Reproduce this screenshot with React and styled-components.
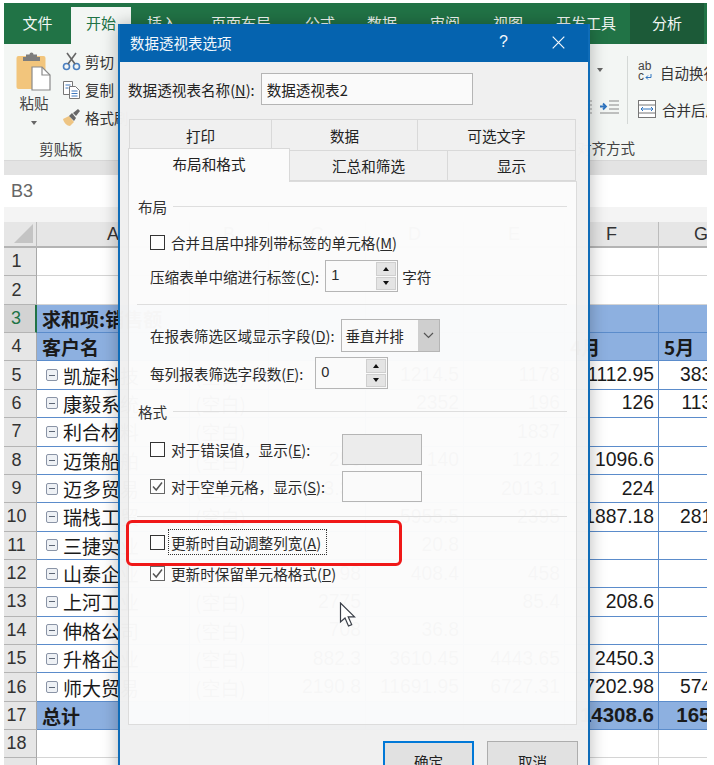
import React from 'react'
import styled, { createGlobalStyle } from 'styled-components'

const CJK = '"Noto Sans CJK SC", "Liberation Sans", sans-serif'
const LATIN = '"Liberation Sans", "Noto Sans CJK SC", sans-serif'

const Global = createGlobalStyle`
  html, body { margin: 0; padding: 0; background: #fff; overflow: hidden; }
  * { box-sizing: border-box; }
`

const Page = styled.div`
  position: relative;
  width: 714px;
  height: 765px;
  overflow: hidden;
  padding: 3px 7px 0 4px;
  font-family: ${CJK};
  color: #222;
`

const Excel = styled.div`
  width: 703px;
  overflow: hidden;
`

/* ribbon */
const TabBar = styled.div`
  display: flex;
  height: 41px;
  background: #217346;
`

const RibbonTab = styled.div`
  width: ${p => p.$w}px;
  margin-top: ${p => (p.$active ? 4 : 0)}px;
  display: flex;
  align-items: center;
  justify-content: center;
  padding-bottom: ${p => (p.$active ? 7 : 3)}px;
  font-size: 15px;
  color: ${p => (p.$active ? '#217346' : '#f2f7f4')};
  background: ${p => (p.$active ? '#f3f6f4' : p.$dark ? '#1c5a38' : 'transparent')};
  margin-left: ${p => p.$gap || 0}px;
`

const Ribbon = styled.div`
  height: 116px;
  background: #f3f6f4;
  display: flex;
  justify-content: space-between;
`

const ClipGroup = styled.div`
  width: 114px;
  display: flex;
  flex-direction: column;
  align-items: center;
  padding-top: 7px;
`

const ClipBody = styled.div`
  display: flex;
  width: 100%;
  height: 88px;
  padding-left: 12px;
`

const Paste = styled.div`
  width: 36px;
  display: flex;
  flex-direction: column;
  align-items: center;
  font-size: 14.5px;
  line-height: 18px;
  color: #333;
`

const Caret = styled.div`
  width: 0;
  height: 0;
  margin: ${p => p.$margin || '9px 0 0'};
  border-left: 3.5px solid transparent;
  border-right: 3.5px solid transparent;
  border-top: 4px solid #666;
`

const ClipList = styled.div`
  margin-left: 10px;
  display: flex;
  flex-direction: column;
  gap: 7px;
`

const ClipItem = styled.div`
  display: flex;
  align-items: center;
  gap: 4px;
  height: 21px;
  font-size: 14.5px;
  color: #333;
  white-space: nowrap;
`

const GroupName = styled.div`
  font-size: 14.5px;
  line-height: 18px;
  margin-top: ${p => p.$top || 0}px;
  color: #444;
`

const AlignGroup = styled.div`
  width: 130px;
  display: flex;
  flex-direction: column;
  overflow: hidden;
`

const AlignBody = styled.div`
  display: flex;
  height: 85px;
  padding: 12px 0 0 11px;
`

const AlignTools = styled.div`
  width: 40px;
  flex: none;
  display: flex;
  flex-direction: column;
  align-items: flex-end;
  gap: 27px;
  padding: 12px 8px 0 0;
  border-right: 1px solid #d4d8d6;
  height: 68px;
`

const WrapList = styled.div`
  display: flex;
  flex-direction: column;
  gap: 15px;
  padding: 5px 0 0 10px;
`

const WrapItem = styled.div`
  display: flex;
  align-items: center;
  gap: ${p => p.$gap}px;
  height: 22px;
  font-size: 14.5px;
  color: #333;
  white-space: nowrap;
`

const GrayBand = styled.div`
  height: 15px;
  background: #e3e3e3;
  border-top: 1px solid #d8d8d8;
`

const FormulaBar = styled.div`
  height: 32px;
  padding-left: 7px;
  display: flex;
  align-items: center;
  font-family: ${LATIN};
  font-size: 18px;
  color: #666;
  background: #fff;
`

const Spacer = styled.div`
  height: 15px;
  background: #f4f4f4;
`

/* sheet */
const Grid = styled.div`
  display: grid;
  grid-template-columns: 33px 153px 79px 97px 98px 101px 94px 85px;
  height: ${p => p.$h}px;
  width: 740px;
`

const ColHead = styled.div`
  display: flex;
  align-items: center;
  justify-content: center;
  background: #e6e6e6;
  border-right: 1px solid #bcbcbc;
  border-bottom: 2px solid #b4b4b4;
  font-family: ${LATIN};
  font-size: 18px;
  color: #333;
`

const Corner = styled.div`
  background: #e6e6e6;
  border-right: 1px solid #bcbcbc;
  border-bottom: 2px solid #b4b4b4;
  display: flex;
  align-items: flex-end;
  justify-content: flex-end;
  padding: 0 3px 3px 0;
`

const RowHead = styled.div`
  display: flex;
  align-items: center;
  justify-content: center;
  padding-right: 7px;
  background: ${p => (p.$active ? '#d3d3d3' : '#e6e6e6')};
  color: ${p => (p.$active ? '#217346' : '#333')};
  border-bottom: 1px solid #b4b4b4;
  border-right: ${p => (p.$active ? '2px solid #217346' : '1px solid #a8a8a8')};
  font-family: ${LATIN};
  font-size: 18px;
`

const cellBack = { head: '#8db0e0', total: '#8db0e0', body: '#fff', blank: '#fff' }

const Cell = styled.div`
  display: flex;
  align-items: center;
  justify-content: ${p => (p.$num ? 'flex-end' : 'flex-start')};
  padding: ${p => (p.$num ? '0 4px 0 0' : '0 0 0 5px')};
  white-space: nowrap;
  overflow: ${p => (p.$clip ? 'hidden' : 'visible')};
  background: ${p => cellBack[p.$kind]};
  border-right: 1px solid ${p => (p.$kind === 'blank' ? '#d4d4d4' : '#5b8ccb')};
  border-bottom: 1px solid ${p => (p.$kind === 'blank' ? '#d4d4d4' : '#5b8ccb')};
  font-family: ${p => (p.$num ? LATIN : CJK)};
  font-size: ${p => (p.$num ? (p.$kind === 'total' ? 20.5 : 19.3) : 19)}px;
  font-weight: ${p => (p.$kind === 'head' || p.$kind === 'total' ? 700 : 400)};
  color: #1a1a1a;
`

const NameCell = styled(Cell)`
  padding-left: 9px;
`

const Minus = styled.span`
  width: 12px;
  height: 12px;
  margin-right: 5px;
  flex: none;
  border: 1px solid #8a94a6;
  border-radius: 2px;
  background: #eef1f5;
  display: flex;
  align-items: center;
  justify-content: center;
  &::after {
    content: '';
    width: 6px;
    height: 1px;
    background: #5d6675;
  }
`

/* dialog */
const Dialog = styled.div`
  position: absolute;
  left: 118px;
  top: 24px;
  width: 472px;
  height: 790px;
  border: 2px solid #0f6cb8;
  border-top: 0;
  box-shadow: 0 0 16px rgba(0, 0, 0, 0.28);
  display: flex;
  flex-direction: column;
`

const TitleBar = styled.div`
  height: 38px;
  flex: none;
  background: #0563af;
  color: #f3f8fc;
  display: flex;
  align-items: center;
  padding: 0 23px 2px 10px;
  font-size: 14.5px;
`

const Title = styled.div`
  flex: 1;
`

const Help = styled.div`
  font-family: ${LATIN};
  font-size: 16px;
  margin-right: 44px;
`

const glass = 'rgba(240, 240, 240, 0.985)'

const Head = styled.div`
  background: ${glass};
  padding: 11px 11px 0 8px;
  flex: none;
`

const NameRow = styled.div`
  display: flex;
  align-items: center;
  height: 32px;
  margin-bottom: 14px;
  font-size: 14.6px;
  color: #222;
`

const NameInput = styled.div`
  width: 212px;
  height: 32px;
  margin-left: 6px;
  padding-left: 5px;
  border: 1px solid #b5b5b5;
  background: #fafafa;
  display: flex;
  align-items: center;
  font-size: 14.6px;
`

const TabRow = styled.div`
  display: flex;
  height: ${p => p.$h}px;
  padding-left: ${p => p.$pad || 0}px;
  position: relative;
`

const Tab = styled.div`
  width: ${p => p.$w}px;
  flex: none;
  display: flex;
  align-items: center;
  justify-content: center;
  font-size: 14.6px;
  color: #222;
  background: #f0f0f0;
  border: 1px solid #d9d9d9;
  border-left-width: ${p => (p.$first ? 1 : 0)}px;
  border-bottom-width: ${p => (p.$low ? 1 : 0)}px;
`

const ActiveTab = styled(Tab)`
  background: #fbfbfb;
  height: 34px;
  margin-top: -2px;
  border-bottom: 0;
  padding-bottom: 4px;
  position: relative;
  z-index: 1;
`

const PanelFrame = styled.div`
  flex: none;
  border-style: solid;
  border-color: ${glass};
  border-width: 0 11px 0 8px;
  background-clip: padding-box;
`

const Panel = styled.div`
  height: 544px;
  padding: 14px 9px 0 8px;
  background: rgba(251, 251, 251, 0.982);
  border: 1px solid #dcdcdc;
  display: flex;
  flex-direction: column;
`

const Section = styled.div`
  display: flex;
  align-items: center;
  gap: 6px;
  height: 20px;
  margin-top: ${p => p.$top || 0}px;
  padding-left: 1px;
  font-size: 14.6px;
  color: #333;
  &::after {
    content: '';
    flex: 1;
    height: 1px;
    background: #dedede;
  }
`

const Rule = styled.div`
  height: 1px;
  flex: none;
  margin-top: ${p => p.$top}px;
  background: #dedede;
`

const Row = styled.div`
  display: flex;
  align-items: center;
  height: ${p => p.$h}px;
  flex: none;
  margin-top: ${p => p.$top}px;
  padding-left: 13px;
  font-size: 14.6px;
  color: #2a2a2a;
  white-space: nowrap;
`

const Box = styled.span`
  width: 15px;
  height: 15px;
  flex: none;
  margin-right: 6px;
  border: 1px solid ${p => (p.$on ? '#666' : '#333')};
  background: #fdfdfd;
  display: flex;
  align-items: center;
  justify-content: center;
`

const Focus = styled.span`
  display: flex;
  align-items: center;
  height: 24px;
  margin-left: -2px;
  padding: 0 5px 0 2px;
  outline: 1px dotted #333;
`

const Spin = styled.div`
  width: 73px;
  height: 32px;
  margin-left: ${p => p.$left}px;
  border: 1px solid #b5b5b5;
  background: #fafafa;
  display: flex;
  justify-content: space-between;
  padding: 1px 1px 1px 5px;
  font-family: ${LATIN};
  font-size: 14.6px;
  line-height: 26px;
`

const SpinButtons = styled.div`
  width: 20px;
  display: flex;
  flex-direction: column;
  gap: 1px;
`

const SpinButton = styled.div`
  flex: 1;
  background: #e4e4e4;
  border: 1px solid #cfcfcf;
  display: flex;
  align-items: center;
  justify-content: center;
  &::after {
    content: '';
    border-left: 3.5px solid transparent;
    border-right: 3.5px solid transparent;
    ${p => (p.$up ? 'border-bottom: 4px solid #111;' : 'border-top: 4px solid #111;')}
  }
`

const Unit = styled.span`
  margin-left: 4px;
`

const Select = styled.div`
  width: 99px;
  height: 33px;
  margin-left: 6px;
  border: 1px solid #b5b5b5;
  background: #fafafa;
  display: flex;
  align-items: stretch;
`

const SelectText = styled.div`
  flex: 1;
  padding-left: 4px;
  display: flex;
  align-items: center;
`

const SelectArrow = styled.div`
  width: 21px;
  background: #cfcfcf;
  display: flex;
  align-items: center;
  justify-content: center;
`

const FieldRow = styled(Row)`
  justify-content: space-between;
  padding-right: 145px;
`

const FieldLabel = styled.span`
  display: flex;
  align-items: center;
`

const FieldBox = styled.div`
  width: 80px;
  height: 31px;
  border: 1px solid #b5b5b5;
  background: ${p => (p.$off ? '#ececec' : '#fafafa')};
`

const Footer = styled.div`
  flex: 1;
  background: ${glass};
  display: flex;
  justify-content: flex-end;
  gap: 13px;
  padding: 16px 10px 0 0;
`

const Button = styled.div`
  width: 91px;
  height: 40px;
  background: #e1e1e1;
  border: ${p => (p.$primary ? '2px solid #0078d7' : '1px solid #adadad')};
  display: flex;
  align-items: center;
  justify-content: center;
  font-size: 14.6px;
  color: #222;
`

/* things lying over the dialog */
const Highlight = styled.div`
  position: absolute;
  left: 126px;
  top: 520px;
  width: 276px;
  height: 46px;
  border: 3px solid #f01818;
  border-radius: 6px;
`

const Pointer = styled.svg`
  position: absolute;
  left: 339px;
  top: 602px;
`

const Mark = styled.svg`
  display: block;
  flex: none;
`

const ClipboardIcon = () => (
  <Mark width="36" height="40" viewBox="0 0 36 40">
    <rect x="0.5" y="5" width="29" height="33" rx="2" fill="#f2c57c" />
    <path d="M10 6V3.5h3.5a2 2 0 0 1 4 0H21V6h3v4H7V6z" fill="#7d7d7d" />
    <path d="M16 16h10l8 8v15H16z" fill="#fff" stroke="#8a8a8a" strokeWidth="1.2" />
    <path d="M26 16v8h8" fill="none" stroke="#8a8a8a" strokeWidth="1.2" />
  </Mark>
)

const ScissorsIcon = () => (
  <Mark width="19" height="19" viewBox="0 0 19 19">
    <circle cx="4.5" cy="14.5" r="3" fill="none" stroke="#4a7fc0" strokeWidth="1.6" />
    <circle cx="14.5" cy="14.5" r="3" fill="none" stroke="#4a7fc0" strokeWidth="1.6" />
    <path d="M6 12L14 1M13 12L5 1" stroke="#666" strokeWidth="1.6" fill="none" />
  </Mark>
)

const CopyIcon = () => (
  <Mark width="19" height="19" viewBox="0 0 19 19">
    <path d="M1.5 1.5h9v13h-9z" fill="#fff" stroke="#777" />
    <path d="M7.5 6.5h6l4 4v8h-10z" fill="#fff" stroke="#777" />
    <path d="M3.5 5h5M3.5 8h3M9.5 11h6M9.5 13.5h6M9.5 16h6" stroke="#3f78bd" />
  </Mark>
)

const BrushIcon = () => (
  <Mark width="19" height="19" viewBox="0 0 19 19">
    <path d="M1 11l6-3 5 6-4 4c-3 0-6-3-7-7z" fill="#eec583" />
    <path d="M7 8l3-3 4 5-2 3z" fill="#666" />
    <path d="M11 5l5-4 2 2-4 5z" fill="#666" />
  </Mark>
)

const IndentIcon = () => (
  <Mark width="32" height="15" viewBox="0 0 32 15">
    <path d="M0 2h5M0 6h5M0 10h5M0 14h5" stroke="#999" />
    <path d="M13 7.5h5M16 4.5l3 3-3 3" stroke="#2f74c0" strokeWidth="1.8" fill="none" />
    <path d="M22 2h10M22 6h10M22 10h10M13 14h19" stroke="#888" />
  </Mark>
)

const WrapIcon = () => (
  <Mark width="15" height="22" viewBox="0 0 15 22">
    <text x="0" y="9" fontFamily={LATIN} fontSize="12" fill="#444">ab</text>
    <text x="0" y="19" fontFamily={LATIN} fontSize="12" fill="#444">c</text>
    <path d="M13 13v3.5H8M10 14.5l-2 2 2 2" stroke="#2f74c0" fill="none" />
  </Mark>
)

const MergeIcon = () => (
  <Mark width="18" height="18" viewBox="0 0 18 18">
    <rect x="0.5" y="0.5" width="17" height="17" fill="#fff" stroke="#777" />
    <path d="M1 5h16M1 13h16" stroke="#777" />
    <path d="M3 9h12M5 7l-2 2 2 2M13 7l2 2-2 2" stroke="#2f74c0" fill="none" />
  </Mark>
)

const Check = () => (
  <Mark width="13" height="13" viewBox="0 0 13 13">
    <path d="M2 6.5l3.2 3.5L11 2.5" stroke="#555" strokeWidth="1.5" fill="none" />
  </Mark>
)

const Chevron = () => (
  <Mark width="11" height="7" viewBox="0 0 11 7">
    <path d="M1 1l4.5 4.5L10 1" stroke="#555" strokeWidth="1.2" fill="none" />
  </Mark>
)

const CloseIcon = () => (
  <Mark width="13" height="13" viewBox="0 0 13 13">
    <path d="M.7.7l11.6 11.6M12.3.7L.7 12.3" stroke="#f3f8fc" strokeWidth="1.2" />
  </Mark>
)

const body = (name, ...cells) => ({ kind: 'body', name, cells })
const empty = { kind: 'blank', cells: ['', '', '', '', '', '', ''] }

const sheet = [
  empty,
  empty,
  { kind: 'head', cells: ['求和项:销售额', '', '', '', '', '', ''] },
  { kind: 'head', cells: ['客户名', '', '', '', '', '4月', '5月'] },
  body('凯旋科技', '(空白)', '', '1214.5', '1178', '1112.95', '3830.5'),
  body('康毅系统', '(空白)', '', '2352', '196', '126', '1130.5'),
  body('利合材料', '(空白)', '', '', '1837', '', ''),
  body('迈策船舶', '(空白)', '256', '140', '121.2', '1096.6', ''),
  body('迈多贸易', '(空白)', '13.35', '', '2013.1', '224', ''),
  body('瑞栈工贸', '(空白)', '', '5955.5', '2395', '1887.18', '2810.5'),
  body('三捷实业', '(空白)', '', '20.8', '', '', ''),
  body('山泰企业', '(空白)', '98', '408.4', '458', '', ''),
  body('上河工业', '(空白)', '2775', '', '85.4', '208.6', ''),
  body('伸格公司', '(空白)', '708', '36.8', '', '', ''),
  body('升格企业', '(空白)', '882.3', '3610.45', '4443.65', '2450.3', ''),
  body('师大贸易', '(空白)', '2190.8', '11691.95', '6727.31', '7202.98', '5740.5'),
  { kind: 'total', cells: ['总计', '', '', '', '', '14308.6', '1650.5'] },
  empty,
  empty,
]

const SheetRow = ({ index, row }) => {
  const { kind, name, cells } = row
  return (
    <Grid $h={28.36}>
      <RowHead $active={index === 3}>{index}</RowHead>
      {name && (
        <NameCell $kind={kind} $clip>
          <Minus />
          {name}
        </NameCell>
      )}
      {cells.map((value, i) => (
        <Cell key={i} $kind={kind} $num={/^[\d.]+$/.test(value)} $clip={i === 0 && !name}>
          {value}
        </Cell>
      ))}
    </Grid>
  )
}

const App = () => {
  return (
    <Page>
      <Global />
      <Excel>
        <TabBar>
          <RibbonTab $w={67}>文件</RibbonTab>
          <RibbonTab $w={60} $active>开始</RibbonTab>
          <RibbonTab $w={62}>插入</RibbonTab>
          <RibbonTab $w={96}>页面布局</RibbonTab>
          <RibbonTab $w={62}>公式</RibbonTab>
          <RibbonTab $w={62}>数据</RibbonTab>
          <RibbonTab $w={64}>审阅</RibbonTab>
          <RibbonTab $w={62}>视图</RibbonTab>
          <RibbonTab $w={94}>开发工具</RibbonTab>
          <RibbonTab $w={74} $gap={-3} $dark>分析</RibbonTab>
        </TabBar>
        <Ribbon>
          <ClipGroup>
            <ClipBody>
              <Paste>
                <ClipboardIcon />
                <GroupName $top={3}>粘贴</GroupName>
                <Caret />
              </Paste>
              <ClipList>
                <ClipItem><ScissorsIcon />剪切</ClipItem>
                <ClipItem><CopyIcon />复制</ClipItem>
                <ClipItem><BrushIcon />格式刷</ClipItem>
              </ClipList>
            </ClipBody>
            <GroupName $top={1}>剪贴板</GroupName>
          </ClipGroup>
          <AlignGroup>
            <AlignBody>
              <AlignTools>
                <Caret $margin="0 16px 0 0" />
                <IndentIcon />
              </AlignTools>
              <WrapList>
                <WrapItem $gap={7}><WrapIcon />自动换行</WrapItem>
                <WrapItem $gap={6}><MergeIcon />合并后居中</WrapItem>
              </WrapList>
            </AlignBody>
            <GroupName $top={10}>对齐方式</GroupName>
          </AlignGroup>
        </Ribbon>
        <GrayBand />
        <FormulaBar>B3</FormulaBar>
        <Spacer />
        <Grid $h={26}>
          <Corner>
            <Mark width="19" height="19" viewBox="0 0 19 19">
              <path d="M19 0v19H0z" fill="#c4c4c4" />
            </Mark>
          </Corner>
          {['A', 'B', 'C', 'D', 'E', 'F', 'G'].map(col => (
            <ColHead key={col}>{col}</ColHead>
          ))}
        </Grid>
        {sheet.map((row, i) => (
          <SheetRow key={i} index={i + 1} row={row} />
        ))}
      </Excel>

      <Dialog>
        <TitleBar>
          <Title>数据透视表选项</Title>
          <Help>?</Help>
          <CloseIcon />
        </TitleBar>
        <Head>
          <NameRow>
            数据透视表名称(<u>N</u>):
            <NameInput>数据透视表2</NameInput>
          </NameRow>
          <TabRow $h={31} $pad={1}>
            <Tab $w={143} $first>打印</Tab>
            <Tab $w={146}>数据</Tab>
            <Tab $w={158}>可选文字</Tab>
          </TabRow>
          <TabRow $h={31}>
            <ActiveTab $w={162} $first>布局和格式</ActiveTab>
            <Tab $w={158} $low>汇总和筛选</Tab>
            <Tab $w={128} $low>显示</Tab>
          </TabRow>
        </Head>
        <PanelFrame>
          <Panel>
            <Section>布局</Section>
            <Row $h={22} $top={15}><Box />合并且居中排列带标签的单元格(<u>M</u>)</Row>
            <Row $h={32} $top={7}>
              压缩表单中缩进行标签(<u>C</u>):
              <Spin $left={6}>
                1
                <SpinButtons><SpinButton $up /><SpinButton /></SpinButtons>
              </Spin>
              <Unit>字符</Unit>
            </Row>
            <Rule $top={12} />
            <Row $h={33} $top={14}>
              在报表筛选区域显示字段(<u>D</u>):
              <Select>
                <SelectText>垂直并排</SelectText>
                <SelectArrow><Chevron /></SelectArrow>
              </Select>
            </Row>
            <Row $h={32} $top={5}>
              每列报表筛选字段数(<u>F</u>):
              <Spin $left={12}>
                0
                <SpinButtons><SpinButton $up /><SpinButton /></SpinButtons>
              </Spin>
            </Row>
            <Section $top={12}>格式</Section>
            <FieldRow $h={31} $top={13}>
              <FieldLabel><Box />对于错误值{'\uFF0C'}显示(<u>E</u>):</FieldLabel>
              <FieldBox $off />
            </FieldRow>
            <FieldRow $h={31} $top={6}>
              <FieldLabel><Box $on><Check /></Box>对于空单元格{'\uFF0C'}显示(<u>S</u>):</FieldLabel>
              <FieldBox />
            </FieldRow>
            <Rule $top={14} />
            <Row $h={24} $top={13}>
              <Box />
              <Focus>更新时自动调整列宽(<u>A</u>)</Focus>
            </Row>
            <Row $h={22} $top={8}><Box $on><Check /></Box>更新时保留单元格格式(<u>P</u>)</Row>
          </Panel>
        </PanelFrame>
        <Footer>
          <Button $primary>确定</Button>
          <Button>取消</Button>
        </Footer>
      </Dialog>

      <Highlight />
      <Pointer width="18" height="26" viewBox="0 0 18 26">
        <path d="M1.5 1v19l4.5-4 3.5 8 3.2-1.4-3.5-7.8h6.3z" fill="#fff" stroke="#3a3f48" strokeWidth="1.2" />
      </Pointer>
    </Page>
  )
}

export default App
